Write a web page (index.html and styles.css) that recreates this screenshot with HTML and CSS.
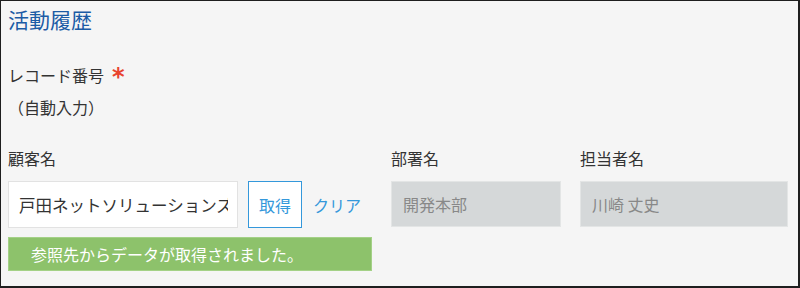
FILE: index.html
```html
<!DOCTYPE html>
<html lang="ja">
<head>
    <meta charset="UTF-8">
    <meta name="viewport" content="width=device-width, initial-scale=1.0">
    <title>活動履歴</title>
    <link rel="stylesheet" href="styles.css">
</head>
<body>
    <div class="panel">
        <h2 class="panel-title">活動履歴</h2>

        <div class="field-label record-label">レコード番号<span class="required">*</span></div>
        <div class="auto-value">（自動入力）</div>

        <div class="field-row">
            <div class="field customer">
                <div class="field-label">顧客名</div>
                <div class="lookup">
                    <input type="text" class="text-input" value="戸田ネットソリューションズ">
                    <button type="button" class="btn-get">取得</button>
                    <a href="#" class="link-clear">クリア</a>
                </div>
                <div class="notice">参照先からデータが取得されました。</div>
            </div>
            <div class="field dept">
                <div class="field-label">部署名</div>
                <div class="readonly-box">開発本部</div>
            </div>
            <div class="field person">
                <div class="field-label">担当者名</div>
                <div class="readonly-box">川崎 丈史</div>
            </div>
        </div>
    </div>
</body>
</html>
```

FILE: styles.css
```css
:root {
    --title-color: #1b5ba5;
    --text-color: #333;
    --blue-color: #3498db;
    --green-color: #8dc26b;
    --gray-box: #d5d8d9;
    --panel-bg: #f5f5f5;
}

* {
    box-sizing: border-box;
}

body {
    margin: 0;
    font-family: "Noto Sans CJK JP", "Noto Sans", sans-serif;
    color: var(--text-color);
    background: #fff;
}

.panel {
    width: 800px;
    height: 288px;
    background-color: var(--panel-bg);
    border-style: solid;
    border-color: #1e1e1e;
    border-width: 1px 2px 2px 1px;
    padding: 5px 10px 0 7px;
}

.panel-title {
    margin: 0;
    font-size: 21px;
    line-height: 26px;
    font-weight: normal;
    color: var(--title-color);
}

.field-label {
    font-size: 16px;
    line-height: 24px;
}

.record-label {
    margin-top: 31px;
}

.required {
    display: inline-block;
    margin-left: 8px;
    color: #e8432f;
    font-family: "DejaVu Sans", sans-serif;
    font-size: 24px;
    font-weight: bold;
    line-height: 24px;
    vertical-align: top;
    transform: translateY(2px);
}

.auto-value {
    margin-top: 8px;
    font-size: 16px;
    line-height: 24px;
}

.field-row {
    display: flex;
    gap: 19px;
    margin-top: 27px;
}

.field .field-label {
    margin-bottom: 11px;
}

.customer {
    width: 364px;
}

.dept {
    width: 170px;
}

.person {
    width: 208px;
}

.lookup {
    display: flex;
    align-items: center;
}

.text-input {
    width: 230px;
    height: 47px;
    padding: 0 9px 0 10px;
    border: 1px solid #e2e2e2;
    background: #fff;
    font-family: inherit;
    font-size: 16.5px;
    color: var(--text-color);
    outline: none;
}

.btn-get {
    width: 54px;
    height: 47px;
    margin-left: 10px;
    border: 1px solid var(--blue-color);
    background: #fff;
    color: var(--blue-color);
    font-family: inherit;
    font-size: 16px;
    padding: 0;
}

.link-clear {
    margin-left: 11px;
    color: var(--blue-color);
    font-size: 16px;
    text-decoration: none;
}

.notice {
    margin-top: 9px;
    height: 34px;
    line-height: 32px;
    padding-left: 22px;
    background-color: var(--green-color);
    border: 1px solid #a4d187;
    color: #fff;
    font-size: 16px;
}

.readonly-box {
    height: 46px;
    line-height: 44px;
    padding-left: 11px;
    background-color: var(--gray-box);
    border: 1px solid #e3e5e5;
    color: #888;
    font-size: 16px;
}
```
